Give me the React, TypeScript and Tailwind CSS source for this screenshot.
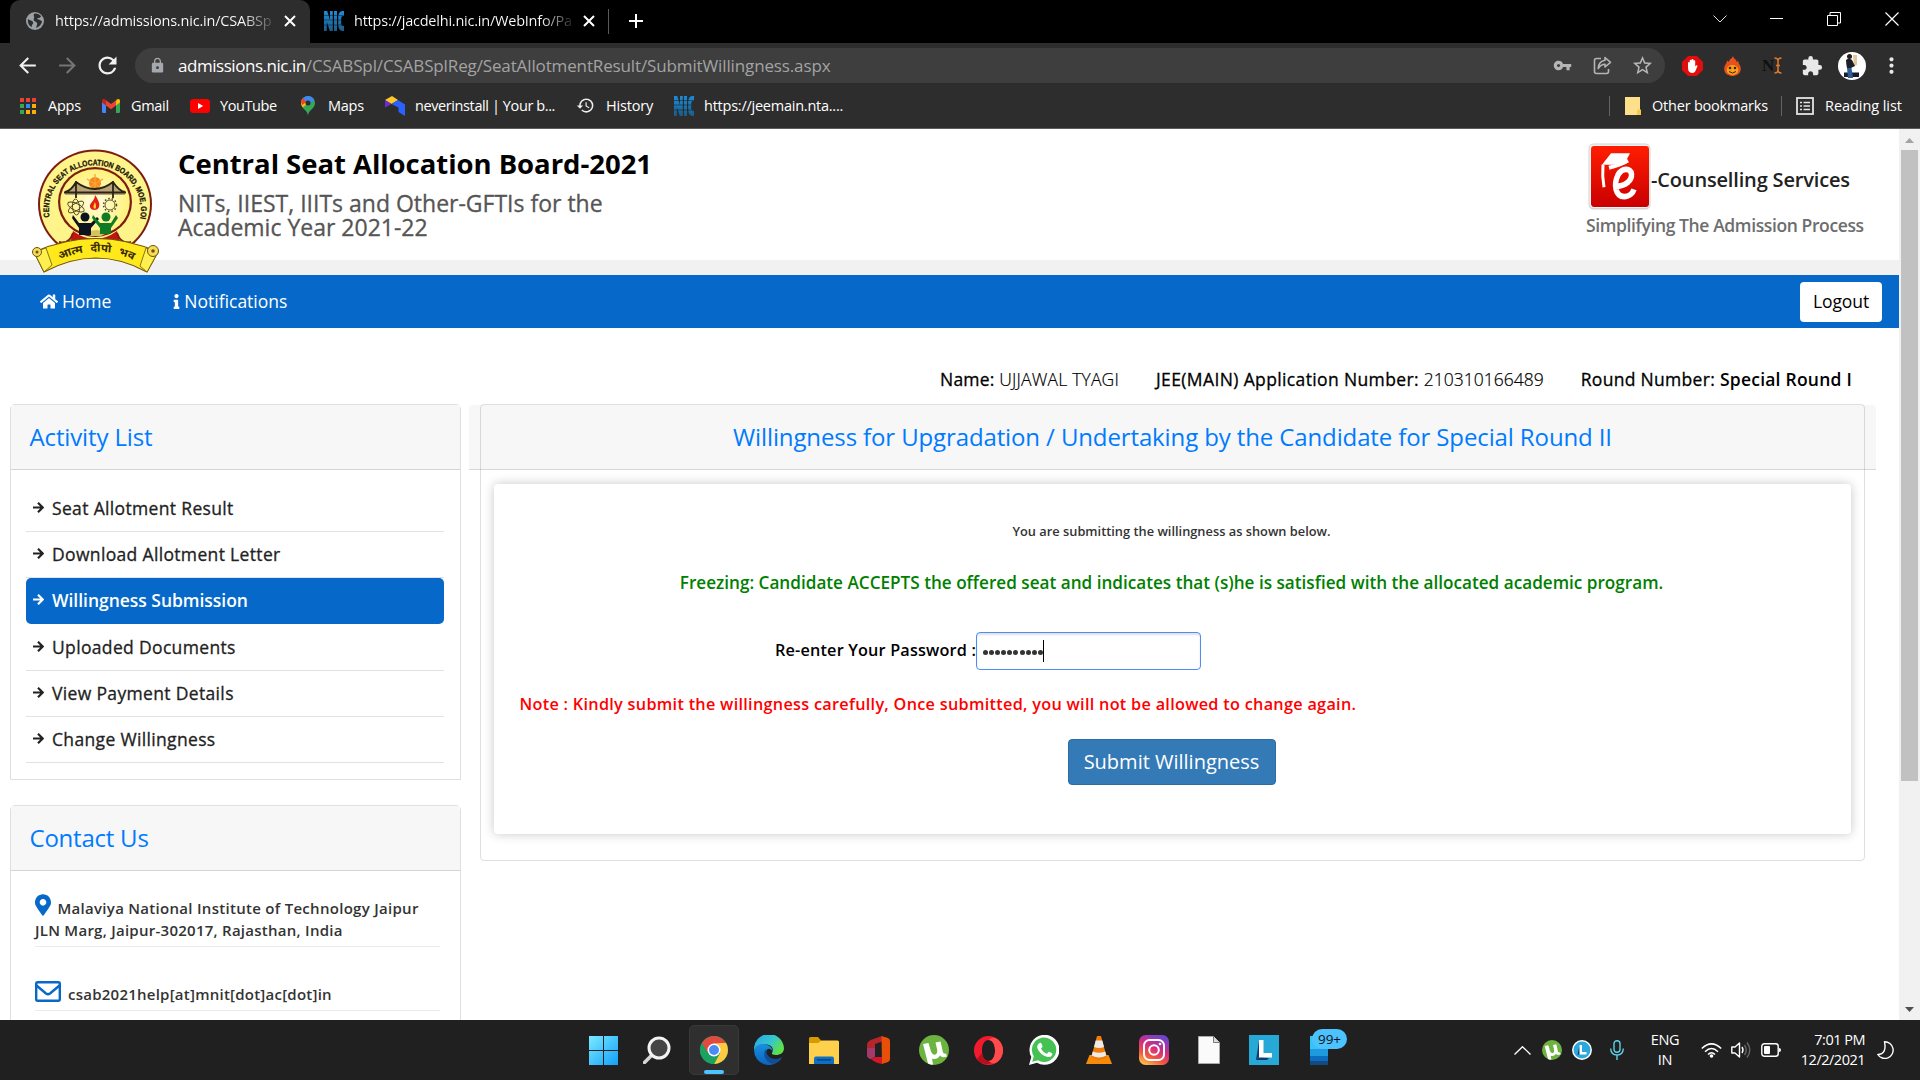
import React from 'react';
import { FaHome, FaInfo, FaMapMarkerAlt } from 'react-icons/fa';
import { MdArrowBack, MdArrowForward, MdRefresh, MdLock, MdVpnKey, MdStarBorder, MdExtension, MdHistory, MdMoreVert } from 'react-icons/md';

function CloseIcon() {
  return (
    <svg className="w-[12px] h-[12px] shrink-0" viewBox="0 0 12 12" stroke="#fff" strokeWidth="2">
      <path d="M1 1L11 11M11 1L1 11" />
    </svg>
  );
}

function GlobeIcon() {
  return (
    <svg className="w-[18px] h-[18px] shrink-0" viewBox="0 0 18 18">
      <circle cx="9" cy="9" r="9" fill="#9aa0a6" />
      <path d="M2 7C4 9 6 8 7 10C8 12 5 12 6 15C3 14 1.500 11 2 7ZM8 2C10 1 13 2 15 4C14 7 12 5 11 7C13 8 16 8 16 10C15 13 13 15 10 16C11 13 12 11 10 10C8 9 7 8 8 6C9 5 7 4 8 2Z" fill="#2d2d2d" />
    </svg>
  );
}

function NicIcon() {
  return (
    <svg className="w-[20px] h-[20px] shrink-0" viewBox="0 0 20 20">
      <defs>
        <linearGradient id="nic" x1="0" y1="0" x2="0" y2="1">
          <stop offset="0" stopColor="#1f8bd6" />
          <stop offset="1" stopColor="#1b5c86" />
        </linearGradient>
      </defs>
      <path d="M0 0H3.200L6 9V0H8.800V20H5.800L2.800 11V20H0ZM10 0H13V20H10ZM20 0V5Q17.200 4.500 17.200 7V13Q17.200 15.500 20 15V20Q14.200 20.500 14.200 14V6Q14.200-.5 20 0Z" fill="url(#nic)" />
      <path d="M0 4.500H20M0 9H17M0 14H17" stroke="#0c1a26" strokeWidth=".5" />
    </svg>
  );
}

function Tabs() {
  return (
    <div className="flex h-[43px] bg-black pl-[10px] text-[14.5px] text-white">
      <div className="flex h-[43px] w-[300px] items-center rounded-t-[10px] bg-[#2d2d2d] pb-[1px] pl-[16px]">
        <GlobeIcon />
        <span className="ml-[11px] w-[219px] whitespace-nowrap bg-gradient-to-r from-white from-85% to-white/10 bg-clip-text tracking-[-0.2px] text-transparent">
          https://admissions.nic.in/CSABSp
        </span>
        <span className="ml-[10px] flex"><CloseIcon /></span>
      </div>
      <div className="flex h-[43px] items-center pb-[1px] pl-[14px]">
        <NicIcon />
        <span className="ml-[10px] w-[219px] whitespace-nowrap bg-gradient-to-r from-white from-85% to-white/10 bg-clip-text tracking-[-0.22px] text-transparent">
          https://jacdelhi.nic.in/WebInfo/Pa
        </span>
        <span className="ml-[10px] flex"><CloseIcon /></span>
        <span className="ml-[13px] h-[25px] w-px bg-[#5a5a5a]" />
        <svg className="ml-[19px] h-[16px] w-[16px]" viewBox="0 0 16 16" stroke="#fff" strokeWidth="2">
          <path d="M8 1V15M1 8H15" />
        </svg>
      </div>
      <div className="ml-auto flex h-[37px] items-center pr-[21px]">
        <svg className="h-[8px] w-[14px]" viewBox="0 0 14 8" fill="none" stroke="#ddd"><path d="M.5.500L7 7L13.500.500" /></svg>
        <span className="ml-[43px] h-px w-[13px] bg-white" />
        <svg className="ml-[44px] h-[14px] w-[14px]" viewBox="0 0 14 14" fill="none" stroke="#fff"><path d="M.5 3.500H10.500V13.500H.5ZM3 3V.500H13.500V11H11" /></svg>
        <svg className="ml-[44px] h-[14px] w-[14px]" viewBox="0 0 14 14" fill="none" stroke="#fff" strokeWidth="1.200"><path d="M.5.500L13.500 13.500M13.500.500L.5 13.500" /></svg>
      </div>
    </div>
  );
}

function Toolbar() {
  return (
    <div className="flex h-[45px] items-center bg-[#2d2d2d] pl-[15px]">
      <MdArrowBack className="h-[25px] w-[25px] text-[#f1f1f1]" />
      <MdArrowForward className="ml-[15px] h-[25px] w-[25px] text-[#757575]" />
      <MdRefresh className="ml-[14px] h-[27px] w-[27px] text-[#f1f1f1]" />
      <div className="ml-[14px] flex h-[35px] w-[1530px] items-center rounded-full bg-[#3e3e3e]">
        <MdLock className="ml-[14px] h-[17px] w-[17px] text-[#a5a8ac]" />
        <span className="ml-[12px] whitespace-nowrap text-[17px] text-[#a3a3a3]">
          <span className="tracking-[-0.46px] text-white">admissions.nic.in</span>
          <span className="tracking-[-0.13px]">/CSABSpl/CSABSplReg/SeatAllotmentResult/SubmitWillingness.aspx</span>
        </span>
        <div className="ml-auto flex items-center pr-[11px] text-[#b5b5b5]">
          <MdVpnKey className="h-[19px] w-[19px]" />
          <svg className="ml-[21px] h-[19px] w-[19px]" viewBox="0 0 19 19" fill="none" stroke="currentColor" strokeWidth="1.600">
            <path d="M8 2.500H3.500Q1.500 2.500 1.500 4.500V15.500Q1.500 17.500 3.500 17.500H13.500Q15.500 17.500 15.500 15.500V13" />
            <path d="M12 1.500L17.500 6.300L12 11V8.200C8.500 8.200 7 9.500 5.200 12.500C5.500 8 8 4.800 12 4.300Z" strokeLinejoin="round" />
          </svg>
          <MdStarBorder className="ml-[19px] h-[23px] w-[23px]" />
        </div>
      </div>
      <svg className="ml-[17px] h-[20px] w-[21px]" viewBox="0 0 21 20">
        <path d="M6.200 0H14.800L21 6V14L14.800 20H6.200L0 14V6Z" fill="#e40d0d" />
        <path d="M6 10V6.500Q7 5.500 7.700 6.500V4.300Q8.600 3.400 9.500 4.300V3.500Q10.500 2.700 11.400 3.500V4.500Q12.400 3.700 13.200 4.700V10.500L14 9.500Q15.200 9 15.500 10L13.200 15.500Q12 17 10 17Q6 16.500 6 12Z" fill="#fff" />
      </svg>
      <svg className="ml-[21px] h-[20px] w-[17px]" viewBox="0 0 17 20">
        <path d="M9 0C10 4 13 3 12.500 6L14.500 5C14 8 17 9 16.800 13C16.500 18 12 20 8.500 20S.3 18 .2 13C0 9 3 8 3 4.500L5 6C5 3 8 3 9 0Z" fill="#e8501d" />
        <ellipse cx="8.500" cy="14" rx="5.800" ry="5" fill="#f9a11b" />
        <circle cx="6" cy="12" r="1.300" fill="#40200c" /><circle cx="11" cy="12" r="1.300" fill="#40200c" />
        <path d="M5 15.500Q8.500 18.500 12 15.500" stroke="#40200c" fill="none" />
      </svg>
      <span className="ml-[21px] font-['Liberation_Serif'] text-[17px] leading-none font-bold text-[#101010]">N</span>
      <svg className="h-[17px] w-[8px]" viewBox="0 0 8 17" fill="none" stroke="#e07a2c" strokeWidth="1.500"><path d="M.5 1Q4 1 4 4V13Q4 16 .5 16M7.500 1Q4 1 4 4M4 13Q4 16 7.500 16M2 8.500H6" /></svg>
      <MdExtension className="ml-[19px] h-[22px] w-[22px] text-[#e8e8e8]" />
      <svg className="ml-[15px] h-[28px] w-[28px]" viewBox="0 0 28 28">
        <defs><clipPath id="av"><circle cx="14" cy="14" r="14" /></clipPath></defs>
        <g clipPath="url(#av)">
          <rect width="28" height="28" fill="#fff" />
          <path d="M15 3H19V13L16 14Z" fill="#e2c79a" />
          <path d="M6 20.500H10V25H6ZM14 20.500H21V25H14Z" fill="#151c2b" />
          <path d="M8 8Q11 5 14 8L17 14L13 16H9Q8 11 8 8Z" fill="#1d2026" />
          <path d="M9 16H13.500L15 26H10Z" fill="#2d5d94" />
          <circle cx="11.500" cy="4.500" r="2.500" fill="#2b1d18" />
        </g>
      </svg>
      <MdMoreVert className="ml-[13px] h-[25px] w-[25px] text-[#e8e8e8]" />
    </div>
  );
}

const appDots = ['#ea4335', '#ea4335', '#ea4335', '#34a853', '#2f8bf0', '#fbab0a', '#34a853', '#fbab0a', '#fbab0a'];

function Bookmarks() {
  return (
    <div className="flex h-[41px] items-center border-b border-[#5c5c5c] bg-[#2d2d2d] pb-[5px] pl-[20px] text-[14.5px] whitespace-nowrap text-white">
      <span className="grid grid-cols-3 gap-[2px]">
        {appDots.map((c, i) => <i key={i} className="h-[4px] w-[4px]" style={{ background: c }} />)}
      </span>
      <span className="ml-[12px] w-[33px] tracking-[-0.25px]">Apps</span>
      <svg className="ml-[21px] h-[14px] w-[18px]" viewBox="0 0 18 14">
        <path d="M0 2V12.700Q0 14 1.300 14H4V5.500Z" fill="#4285f4" />
        <path d="M18 2V12.700Q18 14 16.700 14H14V5.500Z" fill="#34a853" />
        <path d="M14 1.500V6.500L18 3.500V2C18 0 16 -.4 14.700.6Z" fill="#fbbc04" />
        <path d="M4 1.200L9 5L14 1.200V6.500L9 10.200L4 6.500Z" fill="#ea4335" />
        <path d="M4 1.200V6.500L0 3.500V2C0 0 2-.4 3.300.6Z" fill="#c5221f" />
      </svg>
      <span className="ml-[11px] w-[38px] tracking-[-0.3px]">Gmail</span>
      <svg className="ml-[21px] h-[14px] w-[20px]" viewBox="0 0 20 14"><rect width="20" height="14" rx="3.500" fill="#f00" /><path d="M8 4L13.200 7L8 10Z" fill="#fff" /></svg>
      <span className="ml-[10px] w-[57px] tracking-[-0.4px]">YouTube</span>
      <svg className="ml-[24px] h-[20px] w-[14px]" viewBox="0 0 14 20">
        <path d="M7 20C7 14 0 13 0 7A7 7 0 0 1 14 7C14 13 7 14 7 20Z" fill="#34a853" />
        <path d="M2 11.500C.8 10 0 8.500 0 7A7 7 0 0 1 1.500 2.500L7 7Z" fill="#fbbc04" />
        <path d="M0 6A7 7 0 0 1 2 2.200L6 5.500L1 9Z" fill="#ea4335" />
        <path d="M2 2.200A7 7 0 0 1 13.500 4.500L7 8Z" fill="#4285f4" />
        <circle cx="7" cy="7" r="2.500" fill="#2d2d2d" />
      </svg>
      <span className="ml-[13px] w-[36px] tracking-[-0.25px]">Maps</span>
      <svg className="ml-[21px] h-[20px] w-[20px]" viewBox="0 0 20 20">
        <path d="M0 4L7 0L13 4L6.500 8Z" fill="#ffc928" /><path d="M0 4L6.500 8L0 11.500Z" fill="#6d2bd9" />
        <path d="M6.500 8L13 4L20 8.500V20L13.500 16V11.500Z" fill="#2962ff" />
      </svg>
      <span className="ml-[10px] w-[140px] tracking-[-0.4px]">neverinstall | Your b...</span>
      <MdHistory className="ml-[21px] h-[19px] w-[19px] text-[#eee]" />
      <span className="ml-[11px] w-[47px] tracking-[-0.2px]">History</span>
      <span className="ml-[21px] flex"><NicIcon /></span>
      <span className="ml-[10px] w-[139px] tracking-[-0.24px]">https://jeemain.nta....</span>
      <div className="ml-auto flex items-center pr-[18px]">
        <i className="h-[20px] w-px bg-[#646464]" />
        <svg className="ml-[15px] h-[18px] w-[16px]" viewBox="0 0 16 18"><path d="M0 0H15V13H16V18H0Z" fill="#ffe08a" /><path d="M12 18V14L13 12.500H16V18Z" fill="#f5c84c" /></svg>
        <span className="ml-[11px] w-[117px] tracking-[-0.21px]">Other bookmarks</span>
        <i className="ml-[12px] h-[20px] w-px bg-[#646464]" />
        <svg className="ml-[14px] h-[18px] w-[18px]" viewBox="0 0 18 18" fill="none" stroke="#e4e4e4">
          <rect x="1" y="1" width="16" height="16" strokeWidth="1.800" />
          <path d="M4 5.500H6M4 9H6M4 12.500H6M7.500 5.500H14M7.500 9H14M7.500 12.500H14" strokeWidth="1.600" />
        </svg>
        <span className="ml-[11px] w-[77px] tracking-[-0.06px]">Reading list</span>
      </div>
    </div>
  );
}

function Emblem() {
  return (
    <svg className="relative z-10 mt-[20px] h-[125px] w-[130px] shrink-0" viewBox="0 0 130 125">
      <defs>
        <path id="ring" d="M19 70A46 44.500 0 1 1 109 70" />
        <path id="scroll" d="M26 112Q65 93 104 112" />
        <radialGradient id="disc"><stop offset="0" stopColor="#fffde0" /><stop offset="1" stopColor="#fff27a" /></radialGradient>
      </defs>
      <ellipse cx="64" cy="55" rx="57" ry="54.500" fill="#7c1d12" />
      <ellipse cx="64" cy="55" rx="55" ry="52.500" fill="#fff489" />
      <path d="M42 82Q64 98 86 82L93 108H36Z" fill="#c3150f" />
      <path d="M28 93Q38 96 42 84" fill="none" stroke="#7c1d12" strokeWidth="2" />
      <path d="M100 93Q90 96 86 84" fill="none" stroke="#7c1d12" strokeWidth="2" />
      <ellipse cx="64" cy="53" rx="37" ry="35" fill="#7c1d12" />
      <ellipse cx="64" cy="53" rx="34.800" ry="32.800" fill="url(#disc)" />
      <text fill="#1c1405" fontSize="8" fontWeight="700" fontFamily="Liberation Sans" stroke="#1c1405" strokeWidth=".3">
        <textPath href="#ring" startOffset="2" textLength="158" lengthAdjust="spacingAndGlyphs">CENTRAL SEAT ALLOCATION BOARD, MOE, GOI</textPath>
      </text>
      <circle cx="64" cy="34" r="6" fill="#f58a1c" />
      <path d="M64 25V43M56 30L72 40M72 30L56 40" stroke="#f9a63b" strokeWidth="1.300" />
      <path d="M34 43Q40 42 45 33Q64 47 82 33Q88 42 94 43V46H34Z" fill="#b9a377" />
      <path d="M34 43Q40 42 45 33Q64 47 82 33Q88 42 94 43M33 43.500H95M45 32V49M82 32V49" fill="none" stroke="#2b2415" strokeWidth="1.800" />
      <g fill="none" stroke="#4e451c" strokeWidth=".9">
        <ellipse cx="45" cy="58" rx="9" ry="3.500" transform="rotate(25 45 58)" />
        <ellipse cx="45" cy="58" rx="9" ry="3.500" transform="rotate(-35 45 58)" />
        <ellipse cx="45" cy="58" rx="8" ry="3.500" transform="rotate(85 45 58)" />
        <circle cx="79" cy="56" r="5" />
        <circle cx="79" cy="56" r="6.500" strokeWidth="1.500" strokeDasharray="1.500 2" />
      </g>
      <path d="M64 46C68 52 69 55 68 58C67 62 60 62 59 58C58 54 64 52 64 46Z" fill="#e32112" />
      <path d="M64 53Q66 58 64 60Q61 59 64 53Z" fill="#ffd33a" />
      <path d="M55 84Q66 78 76 84L70 87H60Z" fill="#d6c15f" />
      <path d="M42 66L48 74H60L66 68L68 70L60 79V86H48V79L41 69Z" fill="#0c1420" />
      <circle cx="54" cy="68" r="4.500" fill="#0c1420" />
      <path d="M62 66L69 74H80L85 66L87 69L80 79V85H69V79L61 69Z" fill="#117a24" />
      <circle cx="75" cy="68" r="4.500" fill="#117a24" />
      <path d="M3 103Q65 76 127 103L116 123Q65 95 13 123Z" fill="#ffe81c" stroke="#6d5508" strokeWidth="1.200" />
      <path d="M3 103L13 123L21 116L15 99Z" fill="#fff04f" stroke="#6d5508" strokeWidth=".8" />
      <path d="M127 103L116 123L109 117L115 99Z" fill="#fff04f" stroke="#6d5508" strokeWidth=".8" />
      <circle cx="6" cy="103" r="4.500" fill="#f5dc5a" stroke="#6d5508" />
      <circle cx="122" cy="102" r="5.500" fill="#f5dc5a" stroke="#6d5508" />
      <circle cx="6" cy="103" r="1.500" fill="#6d5508" /><circle cx="122" cy="102" r="1.800" fill="#6d5508" />
      <text fill="#3a2c05" fontSize="11" fontWeight="700" wordSpacing="4" fontFamily="Noto Sans Devanagari, Noto Sans, sans-serif">
        <textPath href="#scroll" startOffset="3" textLength="76" lengthAdjust="spacingAndGlyphs">आत्म दीपो भव</textPath>
      </text>
    </svg>
  );
}

function ServicesLogo() {
  return (
    <div className="mt-[14px] ml-auto w-[311px]">
      <div className="flex h-[66px] items-start">
        <svg className="h-[67px] w-[63px] shrink-0" viewBox="0 0 63 65" preserveAspectRatio="none">
          <defs><linearGradient id="red" x1="0" y1="0" x2="0" y2="1"><stop offset="0" stopColor="#ff1d00" /><stop offset="1" stopColor="#c90000" /></linearGradient></defs>
          <rect x=".5" y=".5" width="62" height="64" rx="5" fill="#d3d3d3" />
          <rect x="1.500" y="1.500" width="60" height="61.500" rx="4" fill="#f3f3f3" />
          <rect x="3" y="3" width="58" height="59" rx="3" fill="url(#red)" />
          <path d="M14 21L23 10H42L36 21Z" fill="#fff" />
          <path d="M15 21Q14 32 16 43" stroke="#fff" strokeWidth="3" fill="none" />
          <path d="M21 24Q33 21 40 17" stroke="#fff" strokeWidth="4" fill="none" />
          <path d="M27 42C38 42 44 36 43.500 30C43 24 34 24 30 31C25 41 28 52 36 52C42 52 45 48 46 45" stroke="#fff" strokeWidth="5.500" fill="none" />
        </svg>
        <span className="mt-[23px] font-['Open_Sans'] text-[20px] leading-[28px] font-semibold tracking-[-0.16px] whitespace-nowrap text-[#222]">-Counselling Services</span>
      </div>
      <p className="mt-[2px] ml-[-2px] text-[17.5px] leading-[28px] font-semibold tracking-[-0.39px] whitespace-nowrap text-[#6d6d6d]">Simplifying The Admission Process</p>
    </div>
  );
}

const activities = ['Seat Allotment Result', 'Download Allotment Letter', 'Willingness Submission', 'Uploaded Documents', 'View Payment Details', 'Change Willingness'];

function ArrowIcon() {
  return (
    <svg className="mt-[-2px] h-[11px] w-[11px] shrink-0" viewBox="0 0 11 11" fill="none" stroke="currentColor" strokeWidth="2.200"><path d="M0 5.500H9.500M5 .8L9.700 5.500L5 10.200" /></svg>
  );
}

function Sidebar() {
  return (
    <div className="ml-[10px] w-[451px] shrink-0">
      <section className="h-[376px] rounded-t-[5px] border border-[#dfdfdf]">
        <h2 className="flex h-[65px] items-center border-b border-[#d5d5d5] bg-[#f7f7f7] pb-[1px] pl-[18.5px] text-[24px] tracking-[-0.13px] text-[#007bff]">Activity List</h2>
        <ul className="mt-[16px] mr-[16px] ml-[15px] text-[17.5px] font-medium tracking-[0.34px] text-[#222]">
          {activities.map((a, i) => (
            <li key={a} className={i === 2 ? 'mb-px flex h-[46px] items-center gap-[8px] rounded-[5px] bg-[#0669c9] pb-[1px] pl-[7px] font-semibold tracking-[-0.03px] text-white' : 'flex h-[46px] items-center gap-[8px] border-b border-[#e2e2e2] pb-[1px] pl-[7px] [-webkit-text-stroke:0.3px_#222]'}>
              <ArrowIcon />{a}
            </li>
          ))}
        </ul>
      </section>
      <section className="mt-[25px] h-[300px] rounded-t-[5px] border border-[#dfdfdf]">
        <h2 className="flex h-[65px] items-center border-b border-[#d5d5d5] bg-[#f7f7f7] pb-[1px] pl-[18.5px] text-[24px] tracking-[-0.23px] text-[#007bff]">Contact Us</h2>
        <div className="mr-[20px] ml-[24px] text-[15px] leading-[22px] font-semibold whitespace-nowrap text-[#333]">
          <div className="mt-[26px] border-b border-[#ebebeb] pb-[5px]">
            <p className="flex h-[22px] tracking-[0.29px]"><FaMapMarkerAlt className="mt-[-3px] mr-[6.5px] h-[22px] w-[16px] text-[#0669c9]" />Malaviya National Institute of Technology Jaipur</p>
            <p className="tracking-[0.26px]">JLN Marg, Jaipur-302017, Rajasthan, India</p>
          </div>
          <div className="mt-[36px] border-b border-[#ebebeb] pb-[5px]">
            <p className="flex h-[22px] tracking-[0.24px]">
              <svg className="mt-[-2px] mr-[7px] h-[21px] w-[26px]" viewBox="0 0 26 21" fill="none" stroke="#0669c9" strokeWidth="2.400"><rect x="1.200" y="1.200" width="23.600" height="18.600" rx="1.500" /><path d="M1.500 4.500L11 12.500Q13 14 15 12.500L24.500 4.500" /></svg>
              csab2021help[at]mnit[dot]ac[dot]in
            </p>
          </div>
        </div>
      </section>
    </div>
  );
}

function MainCard() {
  return (
    <section className="ml-[19px] h-[457px] w-[1385px] rounded-[4px] border border-[#dfdfdf]">
      <h1 className="-mx-[12px] flex h-[65px] items-center justify-center rounded-t-[4px] border-b border-black/[0.13] bg-black/[0.033] pb-[1px] text-[24px] tracking-[-0.12px] text-[#007bff]">
        Willingness for Upgradation / Undertaking by the Candidate for Special Round II
      </h1>
      <div className="mx-[13px] mt-[14px] h-[350px] rounded-[4px] bg-white pt-[37px] pr-[2px] whitespace-nowrap shadow-[0_0_11px_rgba(0,0,0,0.22)]">
        <p className="text-center text-[12.8px] leading-[20px] font-semibold tracking-[0.01px] text-[#333]">You are submitting the willingness as shown below.</p>
        <p className="mt-[30px] text-center text-[17.15px] leading-[24px] font-semibold text-[#008000]">Freezing: Candidate ACCEPTS the offered seat and indicates that (s)he is satisfied with the allocated academic program.</p>
        <div className="mt-[37px] flex h-[38px] items-center pl-[281px]">
          <label className="w-[201px] pb-[2px] text-[16.25px] font-semibold tracking-[0.17px] text-black">Re-enter Your Password :</label>
          <div className="flex h-[38px] w-[225px] items-center rounded-[4px] border border-[#4a8df8] pl-[6px] shadow-[inset_0_2px_2px_rgba(0,0,0,0.12)]">
            <span className="flex gap-[1.1px] pt-[2px]">
              {Array.from({ length: 10 }, (_, i) => <i key={i} className="h-[5px] w-[5px] rounded-full bg-[#333]" />)}
            </span>
            <i className="h-[22px] w-px bg-black" />
          </div>
        </div>
        <p className="mt-[22px] pl-[25.5px] text-[16.25px] leading-[24px] font-semibold tracking-[0.285px] text-[#f00]">Note : Kindly submit the willingness carefully, Once submitted, you will not be allowed to change again.</p>
        <button className="mx-auto mt-[23px] flex h-[46px] w-[208px] items-center justify-center rounded-[4px] border border-[#2e6da4] bg-[#337ab7] pb-[1px] text-[20px] text-white">Submit Willingness</button>
      </div>
    </section>
  );
}

function Page() {
  return (
    <div className="flex h-[891px] overflow-hidden bg-white">
      <div className="h-full w-[1899px] overflow-hidden">
        <header className="flex h-[131px] pl-[31px]">
          <Emblem />
          <div className="mt-[21px] ml-[17px]">
            <h1 className="text-[27.5px] leading-[28px] font-bold tracking-[-0.04px] whitespace-nowrap text-black">Central Seat Allocation Board-2021</h1>
            <p className="mt-[13px] w-[440px] text-[23px] leading-[24px] font-medium whitespace-nowrap text-[#555] [-webkit-text-stroke:0.3px_#555]">NITs, IIEST, IIITs and Other-GFTIs for the<br />Academic Year 2021-22</p>
          </div>
          <ServicesLogo />
        </header>
        <div className="h-[15px] bg-[#f1f1f1]" />
        <nav className="flex h-[53px] items-center bg-[#0669c9] pr-[17px] pl-[40px] text-[17.5px] text-white">
          <span className="flex items-center pb-[1px] tracking-[-0.03px]"><FaHome className="mr-[4px] h-[17px] w-[18px]" />Home</span>
          <span className="ml-[62px] flex items-center pb-[1px]"><FaInfo className="mr-[4px] h-[15px] w-[7px]" />Notifications</span>
          <button className="ml-auto h-[40px] w-[82px] rounded-[4px] bg-white pb-[1px] text-[17.5px] tracking-[-0.1px] text-black">Logout</button>
        </nav>
        <div className="flex h-[76px] items-end justify-end pr-[47px] pb-[13px] text-[17.5px] leading-[24px] whitespace-nowrap text-black">
          <p className="mr-[37px]"><span className="font-medium tracking-[0.2px] [-webkit-text-stroke:0.3px_#000]">Name: </span><span className="font-light tracking-[0.18px] [-webkit-text-stroke:0.2px_#000]">UJJAWAL TYAGI</span></p>
          <p className="mr-[37px]"><span className="font-medium tracking-[0.37px] [-webkit-text-stroke:0.3px_#000]">JEE(MAIN) Application Number: </span><span className="font-light [-webkit-text-stroke:0.2px_#000]">210310166489</span></p>
          <p><span className="font-medium tracking-[0.3px] [-webkit-text-stroke:0.3px_#000]">Round Number: </span><span className="font-semibold tracking-[0.23px]">Special Round I</span></p>
        </div>
        <div className="flex items-start">
          <Sidebar />
          <MainCard />
        </div>
      </div>
      <div className="flex w-[21px] flex-col items-center bg-[#f1f1f1]">
        <svg className="mt-[9px] h-[5px] w-[9px]" viewBox="0 0 9 5"><path d="M0 5L4.500 0L9 5Z" fill="#a3a3a3" /></svg>
        <div className="mt-[7px] h-[631px] w-[17px] bg-[#c1c1c1]" />
        <svg className="mt-auto mb-[8px] h-[5px] w-[9px]" viewBox="0 0 9 5"><path d="M0 0L4.500 5L9 0Z" fill="#505050" /></svg>
      </div>
    </div>
  );
}

function Slot({ children }: { children: React.ReactNode }) {
  return <div className="flex h-[60px] w-[55px] shrink-0 items-center justify-center">{children}</div>;
}

function UTorrent({ size }: { size: string }) {
  return (
    <svg className={size} viewBox="0 0 30 30">
      <circle cx="15" cy="15" r="15" fill="#6cb33f" />
      <path d="M4 9L9.500 8L12 16.500Q13.500 20.500 16.500 19.500Q19 18 18 14L16.500 7.500L21.500 6.500L24 17.500Q24.500 19 27 18.500L28 21.500Q23 23.500 21 20.500Q19 24 15 24Q14 24 13 23.500L14 29.500Q11 30 9 28.500Z" fill="#fff" />
    </svg>
  );
}

function Taskbar() {
  return (
    <div className="flex h-[60px] items-center bg-[#202020] pl-[576px]">
      <Slot>
        <svg className="h-[29px] w-[29px]" viewBox="0 0 29 29">
          <defs><linearGradient id="win" x1="0" y1="0" x2="1" y2="1"><stop offset="0" stopColor="#7aeaff" /><stop offset="1" stopColor="#12a0fa" /></linearGradient></defs>
          <path d="M0 0H14V14H0ZM15 0H29V14H15ZM0 15H14V29H0ZM15 15H29V29H15Z" fill="url(#win)" />
        </svg>
      </Slot>
      <Slot>
        <svg className="-ml-[3px] h-[28px] w-[28px]" viewBox="0 0 28 28" fill="none">
          <path d="M1.500 26.500L9 19" stroke="#d5d8da" strokeWidth="3.500" strokeLinecap="round" />
          <circle cx="16" cy="12" r="10" fill="#454545" stroke="#f3f3f3" strokeWidth="3" />
        </svg>
      </Slot>
      <Slot>
        <div className="flex h-[50px] w-[50px] shrink-0 flex-col items-center rounded-[5px] border border-[#393939] bg-[#2f2f2f] pt-[10px]">
          <svg className="h-[28px] w-[28px]" viewBox="0 0 28 28">
            <circle cx="14" cy="14" r="14" fill="#1ba261" />
            <path d="M14 14L1.900 7A14 14 0 0 1 26.100 7L20 9Z" fill="#e04a3f" />
            <path d="M14 7H26.100A14 14 0 0 1 14 28L20 17Z" fill="#fdca40" />
            <path d="M1.900 7A14 14 0 0 0 14 28L20 17H8Z" fill="#1ba261" />
            <path d="M1.900 7L8 17L10 8L20 7H14Z" fill="#e04a3f" />
            <circle cx="14" cy="14" r="6.500" fill="#fff" /><circle cx="14" cy="14" r="5" fill="#4c8bf5" />
          </svg>
          <i className="mt-[6px] h-[4px] w-[20px] shrink-0 rounded-full bg-[#4cc2ff]" />
        </div>
      </Slot>
      <Slot>
        <svg className="h-[30px] w-[30px]" viewBox="0 0 30 30">
          <defs>
            <linearGradient id="edge1" x1="0" y1="0" x2="1" y2=".5"><stop offset="0" stopColor="#2aa3e8" /><stop offset=".6" stopColor="#34c6cf" /><stop offset="1" stopColor="#5fe04a" /></linearGradient>
            <linearGradient id="edge2" x1="0" y1="0" x2="0" y2="1"><stop offset="0" stopColor="#1991e0" /><stop offset="1" stopColor="#0a62bd" /></linearGradient>
          </defs>
          <path d="M0 15A15 15 0 0 1 30 13C30 18 26 20 22 20C18 20 17 18.500 18.500 17C20 13 17 9.500 12 9.500C6 9.500 2 12 0 15Z" fill="url(#edge1)" />
          <path d="M0 15C2 9 8 8 12 9.500C17 11 19 14 18.500 17C17 12 12 13 12 18C12 24 18 27 28 22.500A15 15 0 0 1 0 15Z" fill="url(#edge2)" />
          <path d="M12 14C8 19 11 27 19 29A15 15 0 0 0 28 22.500C20 26 12 23 12 14Z" fill="#134d96" />
        </svg>
      </Slot>
      <Slot>
        <svg className="h-[27px] w-[30px]" viewBox="0 0 30 27">
          <path d="M0 1.500Q0 0 1.500 0H9L12.500 4H28V12H0Z" fill="#d99a00" />
          <path d="M0 6H9L12.500 3.500H28.500Q30 3.500 30 5V27H0Z" fill="#ffd04c" />
          <path d="M5 27V21.500Q5 19.500 7 19.500H23Q25 19.500 25 21.500V27Z" fill="#0f6fc4" /><path d="M8 22.800H22" stroke="#063e7a" strokeWidth="1.300" />
        </svg>
      </Slot>
      <Slot>
        <svg className="h-[28px] w-[23px]" viewBox="0 0 23 28">
          <path d="M15 0L5 3.500Q0 5 0 9V19Q0 22 4 23L8 20.500V8L15 5.500Z" fill="#b5252b" />
          <path d="M14.500 0L21 2Q23 3 23 5V23Q23 25 21 26L15 28Z" fill="#e8500a" />
          <path d="M4 23L8 21H15V28Q8 27 4 23Z" fill="#d3172a" />
          <path d="M0 12V19Q0 22 4 23L8 20.500V12Z" fill="#a33a6a" />
        </svg>
      </Slot>
      <Slot><UTorrent size="h-[30px] w-[30px]" /></Slot>
      <Slot>
        <svg className="h-[29px] w-[29px]" viewBox="0 0 29 29">
          <path fillRule="evenodd" d="M14.500 0A14.500 14.500 0 1 0 14.500 29A14.500 14.500 0 1 0 14.500 0ZM14.500 4C18.500 4 21 8.500 21 14.500S18.500 25 14.500 25S8 20.500 8 14.500S10.500 4 14.500 4Z" fill="#f21b2d" />
          <path d="M8 17C8.500 22 11 25 14.500 25C18 25 20 24 22 22C18 30 8 30 3 23Z" fill="#b80d1b" />
          <path d="M14.500 4C18.500 0 22 2 24 3.500A14.500 14.500 0 0 1 24 25.500C21 28 18 28 14.500 25C18.500 25 21 20.500 21 14.500S18.500 4 14.500 4Z" fill="#ff4b4b" />
        </svg>
      </Slot>
      <Slot>
        <svg className="h-[30px] w-[30px]" viewBox="0 0 30 30">
          <path d="M0 30L2.300 22A15 15 0 1 1 8 27.800Z" fill="#fff" />
          <path d="M3.200 26.800L4.800 21.300A12.200 12.200 0 1 1 9 25.300Z" fill="#46c254" />
          <path d="M10.700 8Q12 7.500 12.500 8.800L13.500 11.200Q13.800 12 12 13.500Q14 17.500 18 18.700L19.500 17Q20 16.500 20.700 16.900L23 18.200Q23.700 18.700 23 20.200Q21.500 22.500 18.500 22Q11 20 8.300 13Q7.700 9.800 10.700 8Z" fill="#fff" />
        </svg>
      </Slot>
      <Slot>
        <svg className="h-[28px] w-[26px]" viewBox="0 0 26 28">
          <path d="M3.500 19H22.500L26 28H0Z" fill="#f68b0a" /><path d="M11 0H15L21 22Q13 26 5 22Z" fill="#f47c05" />
          <path d="M9.700 4.500H16.300L18 11Q13 13 8 11ZM6.800 15.500Q13 18 19.200 15.500L20.300 19.500Q13 23.500 5.700 19.500Z" fill="#ececec" />
        </svg>
      </Slot>
      <Slot>
        <svg className="h-[30px] w-[30px]" viewBox="0 0 30 30" fill="none">
          <defs><linearGradient id="ig" x1=".2" y1="1" x2=".7" y2="0"><stop offset="0" stopColor="#fdc04a" /><stop offset=".3" stopColor="#f0563e" /><stop offset=".6" stopColor="#d02c86" /><stop offset="1" stopColor="#6a45cf" /></linearGradient></defs>
          <rect width="30" height="30" rx="6.500" fill="url(#ig)" />
          <rect x="5" y="5" width="20" height="20" rx="5.500" stroke="#fff" strokeWidth="2" />
          <circle cx="15" cy="15" r="4.800" stroke="#fff" strokeWidth="2" /><circle cx="21" cy="9" r="1.300" fill="#fff" />
        </svg>
      </Slot>
      <Slot><svg className="h-[28px] w-[22px]" viewBox="0 0 22 28"><path d="M.5.500H15.500L21.500 6.500V27.500H.5Z" fill="#fafafa" stroke="#aaa" /><path d="M15.500.500V6.500H21.500" fill="#ddd" stroke="#777" /></svg></Slot>
      <Slot>
        <svg className="h-[30px] w-[30px]" viewBox="0 0 30 30"><rect width="30" height="30" fill="#27a9d8" /><path d="M10 6L7 25L10 22ZM7 25L10 21.500L20 23L18 25Z" fill="#123a70" /><path d="M10 5H14.500V18H23V22.500H10Z" fill="#fff" /></svg>
      </Slot>
      <div className="relative flex h-[60px] w-[55px] shrink-0 items-center">
        <svg className="ml-[19px] h-[30px] w-[18px]" viewBox="0 0 18 30"><path d="M0 1H18V14H0Z" fill="#35c5f4" /><path d="M0 14H18V21.500H0Z" fill="#1f9ade" /><path d="M0 21H18V26H0Z" fill="#0b6cc0" /><path d="M0 26H18V30H0Z" fill="#154a80" /></svg>
        <span className="absolute top-[9px] left-[21px] flex h-[20px] w-[35px] items-center justify-center rounded-full bg-[#4cc2ff] text-[13.5px] text-[#111]">99+</span>
      </div>
      <div className="ml-auto flex items-center text-white">
        <svg className="h-[9px] w-[17px]" viewBox="0 0 17 9" fill="none" stroke="#fff" strokeWidth="1.300"><path d="M.5 8.500L8.500.700L16.500 8.500" /></svg>
        <span className="ml-[11px]"><UTorrent size="h-[20px] w-[20px]" /></span>
        <svg className="ml-[10px] h-[20px] w-[20px]" viewBox="0 0 20 20"><circle cx="10" cy="10" r="9.200" fill="#2ba9dd" stroke="#fff" strokeWidth="1.500" /><path d="M7.500 5L5.500 15L8 14Z" fill="#123a70" /><path d="M7.500 5H10V12H14.500V14.500H7.500Z" fill="#fff" /></svg>
        <svg className="ml-[18px] h-[20px] w-[14px]" viewBox="0 0 14 20" fill="none" stroke="#5fd0e8" strokeWidth="1.400"><rect x="4" y=".7" width="6" height="11.500" rx="3" /><path d="M.7 8.500Q1 15 7 15T13.300 8.500M7 15V20" /></svg>
        <div className="ml-[26px] w-[30px] text-center text-[14.5px] leading-[20px] tracking-[-0.3px]">ENG<br />IN</div>
        <svg className="ml-[21px] h-[15px] w-[21px]" viewBox="0 0 21 15" fill="none" stroke="#fff" strokeWidth="1.500"><path d="M.8 5.500Q10.500-3.700 20.200 5.500M4 8.700Q10.500 2.300 17 8.700M7 11.500Q10.500 8 14 11.500" /><circle cx="10.500" cy="13" r="1.800" fill="#fff" stroke="none" /></svg>
        <svg className="ml-[9px] h-[18px] w-[20px]" viewBox="0 0 20 18" fill="none" stroke="#fff" strokeWidth="1.400"><path d="M.8 6H4L8.500 2V16L4 12H.8Z" strokeLinejoin="round" /><path d="M11 6Q13 9 11 12" /><path d="M13.500 4Q17 9 13.500 14M16 1.500Q21.500 9 16 16.500" stroke="#666" /></svg>
        <svg className="ml-[10px] h-[14px] w-[20px]" viewBox="0 0 20 14"><rect x=".8" y=".8" width="16.400" height="12.400" rx="2.500" fill="none" stroke="#fff" strokeWidth="1.400" /><rect x="3" y="3" width="6" height="8" rx="1" fill="#fff" /><path d="M18 5Q20 5 20 7T18 9Z" fill="#fff" /></svg>
        <div className="ml-[19px] w-[65px] text-right text-[14.5px] leading-[20px] tracking-[-0.5px] whitespace-nowrap">7:01 PM<br />12/2/2021</div>
        <svg className="mr-[26px] ml-[12px] h-[18px] w-[17px]" viewBox="0 0 17 18" fill="none" stroke="#fff" strokeWidth="1.400"><path d="M7.500.800A8.300 8.300 0 1 1 .8 13.500Q10 13 7.500.800Z" strokeLinejoin="round" /></svg>
      </div>
    </div>
  );
}

export default function App() {
  return (
    <div className="h-[1080px] w-[1920px] overflow-hidden bg-white font-['Open_Sans','Noto_Sans',sans-serif]">
      <Tabs />
      <Toolbar />
      <Bookmarks />
      <Page />
      <Taskbar />
    </div>
  );
}
